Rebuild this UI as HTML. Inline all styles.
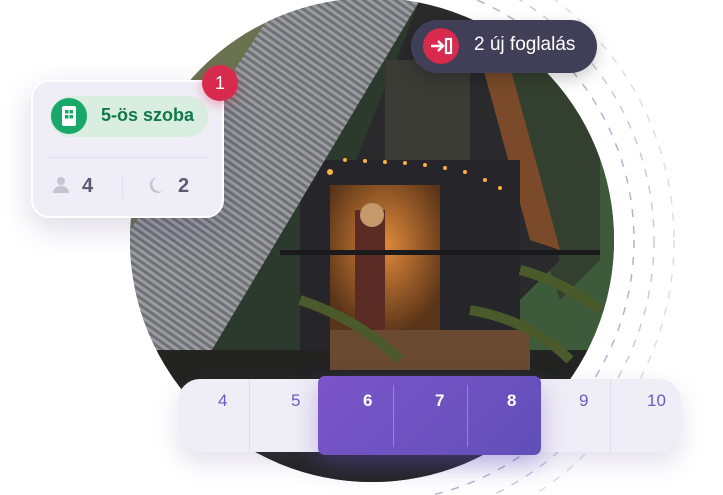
<!DOCTYPE html>
<html><head><meta charset="utf-8"><style>
html,body{margin:0;width:723px;height:495px;overflow:hidden}
body{background:#fff;position:relative;font-family:"Liberation Sans",sans-serif}
.abs{position:absolute}
</style></head><body>
<svg class="abs" style="left:0;top:0" width="723" height="495" viewBox="0 0 723 495">
<defs>
<clipPath id="c"><circle cx="372" cy="240" r="242"/></clipPath>
<clipPath id="r"><rect x="430" y="0" width="300" height="495"/></clipPath>
<pattern id="stripe" width="6" height="6" patternUnits="userSpaceOnUse" patternTransform="rotate(-55)">
<rect width="6" height="6" fill="#6e7176"/><rect width="3" height="6" fill="#9a9ca0"/></pattern>
<radialGradient id="glow" cx="0.5" cy="0.4" r="0.6"><stop offset="0" stop-color="#e08a3a"/><stop offset="1" stop-color="#5a3418"/></radialGradient>
</defs>
<g fill="none" stroke="#b5b3d0" stroke-width="1.5" stroke-dasharray="8 9" clip-path="url(#r)">
<circle cx="372" cy="240" r="262"/>
<circle cx="372" cy="240" r="282" opacity=".7"/>
<circle cx="372" cy="240" r="302" opacity=".45"/>
</g>
<g clip-path="url(#c)">
<rect x="120" y="0" width="500" height="490" fill="#2b3a2c"/>
<rect x="120" y="0" width="180" height="200" fill="#5b6a4a"/>
<rect x="520" y="60" width="100" height="330" fill="#3d5a3a"/>
<polygon points="460,0 600,0 600,260 560,300" fill="#34402f"/>
<polygon points="420,0 470,10 560,260 520,300 300,300" fill="#2a2a2c"/>
<polygon points="470,20 500,30 560,250 530,240" fill="#7a4a2a"/>
<polygon points="385,60 470,60 470,170 385,170" fill="#3a3b35"/>
<rect x="300" y="160" width="220" height="200" fill="#26262a"/>
<rect x="330" y="185" width="110" height="150" fill="url(#glow)"/>
<rect x="355" y="210" width="30" height="130" fill="#5a2a25"/>
<circle cx="372" cy="215" r="12" fill="#c49a6a"/>
<polygon points="280,0 420,0 200,370 130,340 130,230" fill="url(#stripe)"/>
<polygon points="130,0 280,0 130,230" fill="#6a7250"/>
<g fill="#ffb040"><circle cx="345" cy="160" r="2"/><circle cx="365" cy="161" r="2"/><circle cx="385" cy="162" r="2"/><circle cx="405" cy="163" r="2"/><circle cx="425" cy="165" r="2"/><circle cx="445" cy="168" r="2"/><circle cx="465" cy="172" r="2"/><circle cx="485" cy="180" r="2"/><circle cx="500" cy="188" r="2"/><circle cx="330" cy="172" r="3"/></g>
<rect x="280" y="250" width="320" height="5" fill="#1a1a1c"/>
<rect x="120" y="350" width="500" height="140" fill="#232422"/>
<rect x="330" y="330" width="200" height="40" fill="#6a4a30"/>
<path d="M300 300 q60 20 100 60 M470 310 q60 10 100 50 M520 270 q40 10 80 40" stroke="#4a5a2a" stroke-width="10" fill="none"/>
</g>
</svg>

<div class="abs" style="left:178px;top:379px;width:503px;height:73px;border-radius:22px;background:#efedf5;box-shadow:0 10px 25px rgba(90,80,140,.18)"></div>
<div class="abs" style="left:249px;top:379px;width:1px;height:73px;background:#e0dde9"></div>
<div class="abs" style="left:610px;top:379px;width:1px;height:73px;background:#e0dde9"></div>
<div class="abs" style="left:318px;top:376px;width:223px;height:79px;border-radius:7px;background:linear-gradient(135deg,#7b55c9,#604fb8);box-shadow:0 10px 25px rgba(100,80,200,.35)"></div>
<div class="abs" style="left:393px;top:385px;width:1px;height:62px;background:rgba(255,255,255,.3)"></div>
<div class="abs" style="left:467px;top:385px;width:1px;height:62px;background:rgba(255,255,255,.3)"></div>
<div class="abs" style="top:391px;left:0;width:723px;height:30px;font-size:17px;color:#6d5bc4">
<span class="abs" style="left:218px">4</span><span class="abs" style="left:291px">5</span>
<span class="abs" style="left:363px;color:#fff;font-weight:bold">6</span><span class="abs" style="left:435px;color:#fff;font-weight:bold">7</span><span class="abs" style="left:507px;color:#fff;font-weight:bold">8</span>
<span class="abs" style="left:579px">9</span><span class="abs" style="left:647px">10</span></div>

<div class="abs" style="left:411px;top:20px;width:186px;height:53px;border-radius:27px;background:#403f58;box-shadow:0 6px 16px rgba(0,0,0,.2)"></div>
<div class="abs" style="left:423px;top:28px;width:36px;height:36px;border-radius:50%;background:#d72a4c"></div>
<svg class="abs" style="left:429px;top:36px" width="26" height="20" viewBox="0 0 26 20"><path d="M2 10h11M9 5l5 5-5 5" stroke="#fff" stroke-width="2.4" fill="none"/><rect x="17" y="3" width="5" height="14" stroke="#fff" stroke-width="2.2" fill="none"/></svg>
<div class="abs" style="left:474px;top:34px;font-size:19px;color:#fff">2 új foglalás</div>

<div class="abs" style="left:31px;top:80px;width:193px;height:138px;border-radius:18px;background:#efedf5;border:2px solid #fff;box-sizing:border-box;box-shadow:0 10px 30px rgba(60,50,110,.18)"></div>
<div class="abs" style="left:50px;top:96px;width:158px;height:41px;border-radius:21px;background:#d9ede0"></div>
<div class="abs" style="left:51px;top:98px;width:36px;height:36px;border-radius:50%;background:#17a86a"></div>
<svg class="abs" style="left:60px;top:105px" width="18" height="22" viewBox="0 0 18 22"><rect x="2" y="1" width="14" height="20" rx="2" fill="#fff"/><g fill="#17a86a"><rect x="5" y="5" width="3.5" height="3.5"/><rect x="9.5" y="5" width="3.5" height="3.5"/><rect x="5" y="10" width="3.5" height="3.5"/><rect x="9.5" y="10" width="3.5" height="3.5"/></g></svg>
<div class="abs" style="left:101px;top:105px;font-size:18px;font-weight:bold;color:#0f7a48">5-ös szoba</div>
<div class="abs" style="left:48px;top:157px;width:160px;height:1px;background:#e2e0ea"></div>
<div class="abs" style="left:122px;top:173px;width:1px;height:26px;background:#e2e0ea"></div>
<svg class="abs" style="left:52px;top:176px" width="18" height="18" viewBox="0 0 18 18"><circle cx="9" cy="5" r="4" fill="#c6c3d3"/><path d="M1 17c0-5 4-7 8-7s8 2 8 7z" fill="#c6c3d3"/></svg>
<div class="abs" style="left:82px;top:175px;font-size:20px;font-weight:bold;color:#5b5a72">4</div>
<svg class="abs" style="left:148px;top:176px" width="16" height="18" viewBox="0 0 16 18"><path d="M9 1a8 8 0 1 0 6 14A7 7 0 0 1 9 1z" fill="#c6c3d3"/></svg>
<div class="abs" style="left:178px;top:175px;font-size:20px;font-weight:bold;color:#5b5a72">2</div>
<div class="abs" style="left:202px;top:65px;width:36px;height:36px;border-radius:50%;background:#d72a4c;color:#fff;font-size:18px;text-align:center;line-height:36px;box-shadow:0 4px 10px rgba(215,42,76,.35)">1</div>
</body></html>
